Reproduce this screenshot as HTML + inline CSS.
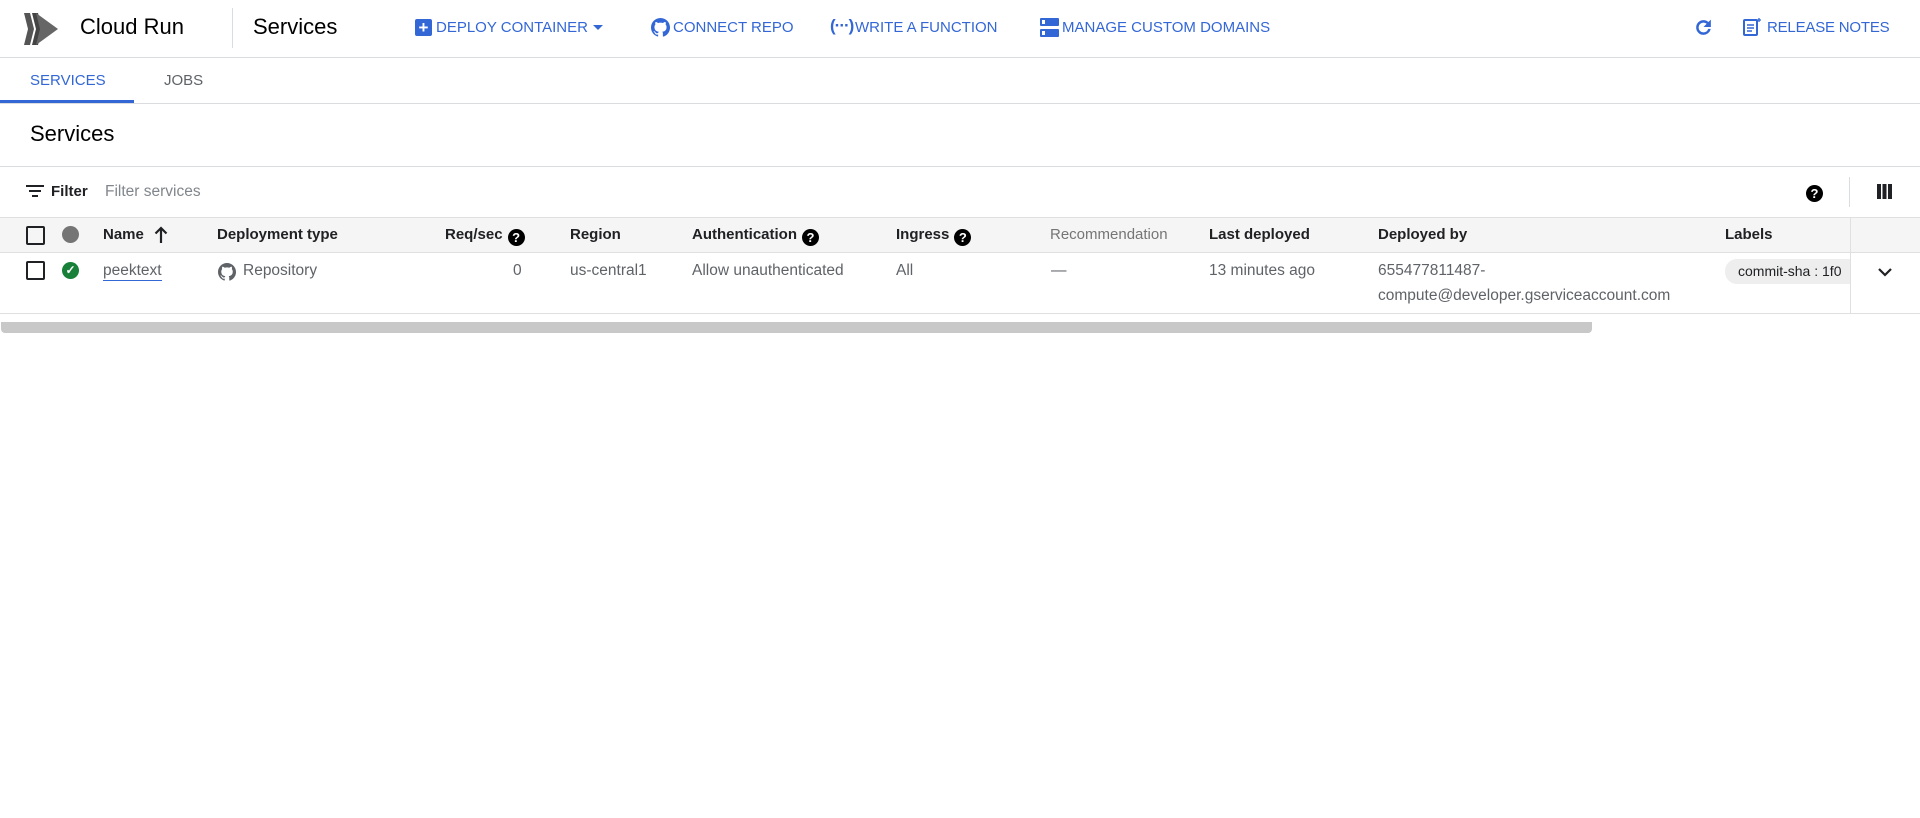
<!DOCTYPE html>
<html><head><meta charset="utf-8"><style>
*{box-sizing:border-box;margin:0;padding:0}
body{width:1920px;height:818px;background:#fff;font-family:"Liberation Sans",sans-serif;color:#202124;position:relative;overflow:hidden}
.a{position:absolute;white-space:nowrap}
.blue{color:#3367d6}
.hl{position:absolute;left:0;width:1920px;height:1px;background:#dadce0}
.h{font-weight:bold;font-size:15px;color:#202124;top:226px}
.d{font-size:15.5px;color:#5f6368;top:262px}
.q{display:inline-block;width:17px;height:17px;border-radius:50%;background:#000;color:#fff;font-size:13px;font-weight:bold;text-align:center;line-height:17px;vertical-align:-3px;margin-left:5px}
</style></head><body>
<svg class="a" style="left:20px;top:9px" width="40" height="40" viewBox="0 0 40 40">
<polygon points="4,4 10,4 14,20 10,36 4,36 8,20" fill="#555"/>
<polygon points="12,4 18,4 22,20 18,36 12,36 16,20" fill="#444"/>
<polygon points="16,4 38,20 16,36 20,20" fill="#666"/>
</svg>
<div class="a" style="left:80px;top:14px;font-size:22px;color:#000">Cloud Run</div>
<div class="a" style="left:232px;top:8px;width:1px;height:40px;background:#dadce0"></div>
<div class="a" style="left:253px;top:14px;font-size:22px;color:#000">Services</div>

<div class="a" style="left:415px;top:19px;width:17px;height:17px;background:#3367d6;border-radius:2px;color:#fff;font-weight:bold;font-size:17px;line-height:17px;text-align:center">+</div>
<div class="a blue" style="left:436px;top:19px;font-size:15px">DEPLOY CONTAINER</div>
<div class="a" style="left:593px;top:25px;width:0;height:0;border-left:5px solid transparent;border-right:5px solid transparent;border-top:5px solid #3367d6"></div>

<svg class="a" style="left:651px;top:18px" width="19" height="19" viewBox="0 0 16 16"><path fill="#3367d6" d="M8 0C3.58 0 0 3.58 0 8c0 3.54 2.29 6.53 5.47 7.590.4.07.55-.17.55-.38v-1.33c-2.23.48-2.7-1.07-2.7-1.07-.36-.92-.89-1.17-.89-1.17-.73-.5.05-.49.05-.49.8.06 1.23.83 1.23.83.72 1.23 1.88.87 2.34.67.07-.52.28-.87.51-1.07-1.78-.2-3.65-.89-3.65-3.95 0-.87.31-1.59.82-2.15-.08-.2-.36-1.02.08-2.12 0 0 .67-.21 2.2.82.64-.18 1.32-.27 2-.27s1.36.09 2 .27c1.53-1.04 2.2-.82 2.2-.82.44 1.1.16 1.92.08 2.12.51.56.82 1.27.82 2.15 0 3.07-1.87 3.75-3.65 3.95.29.25.54.73.54 1.48v2.2c0 .21.15.46.55.38A8.01 8.01 0 0016 8c0-4.42-3.58-8-8-8z"/></svg>
<div class="a blue" style="left:673px;top:19px;font-size:15px">CONNECT REPO</div>

<div class="a blue" style="left:830px;top:16px;font-size:17px;font-weight:bold;letter-spacing:-1px">(···)</div>
<div class="a blue" style="left:855px;top:19px;font-size:15px">WRITE A FUNCTION</div>

<svg class="a" style="left:1040px;top:18px" width="19" height="19" viewBox="0 0 19 19"><rect x="0" y="0" width="19" height="8" rx="1" fill="#3367d6"/><rect x="0" y="11" width="19" height="8" rx="1" fill="#3367d6"/><rect x="2" y="2" width="3" height="4" fill="#fff"/><rect x="2" y="13" width="3" height="4" fill="#fff"/></svg>
<div class="a blue" style="left:1062px;top:19px;font-size:15px">MANAGE CUSTOM DOMAINS</div>

<svg class="a" style="left:1693px;top:17px" width="21" height="21" viewBox="0 0 24 24"><path fill="#3367d6" d="M17.65 6.35A7.958 7.958 0 0012 4c-4.42 0-7.99 3.58-7.99 8s3.57 8 7.99 8c3.73 0 6.84-2.550 7.73-6h-2.08A5.99 5.99 0 0112 18c-3.31 0-6-2.690-6-6s2.69-6 6-6c1.66 0 3.14.69 4.22 1.78L13 11h7V4l-2.35 2.35z" stroke="#3367d6" stroke-width="0.8"/></svg>
<svg class="a" style="left:1742px;top:17px" width="20" height="20" viewBox="0 0 20 20"><rect x="2" y="3" width="13" height="15" rx="1" fill="none" stroke="#3367d6" stroke-width="2"/><path d="M5 8h7M5 11h7M5 14h5" stroke="#3367d6" stroke-width="1.6"/><path d="M17 1v4M15 3h4" stroke="#3367d6" stroke-width="1.3"/></svg>
<div class="a blue" style="left:1767px;top:19px;font-size:15px;letter-spacing:-0.2px">RELEASE NOTES</div>

<div class="hl" style="top:57px"></div>
<div class="a blue" style="left:30px;top:72px;font-size:15px">SERVICES</div>
<div class="a" style="left:164px;top:72px;font-size:15px;color:#5f6368">JOBS</div>
<div class="a" style="left:0;top:100px;width:134px;height:3px;background:#3367d6"></div>
<div class="hl" style="top:103px"></div>
<div class="a" style="left:30px;top:121px;font-size:22px;color:#000">Services</div>
<div class="hl" style="top:166px"></div>
<svg class="a" style="left:26px;top:184px" width="18" height="14" viewBox="0 0 18 14"><path d="M0 2h18M3 7h12M6 12h6" stroke="#202124" stroke-width="2"/></svg>
<div class="a" style="left:51px;top:183px;font-size:15px;font-weight:bold">Filter</div>
<div class="a" style="left:105px;top:183px;font-size:15.5px;color:#80868b">Filter services</div>
<div class="a" style="left:1806px;top:182px"><span class="q" style="margin:0">?</span></div>
<div class="a" style="left:1849px;top:177px;width:1px;height:30px;background:#dadce0"></div>
<svg class="a" style="left:1877px;top:184px" width="15" height="15" viewBox="0 0 15 15"><rect x="0" y="0" width="4" height="15" fill="#202124"/><rect x="5.5" y="0" width="4" height="15" fill="#202124"/><rect x="11" y="0" width="4" height="15" fill="#202124"/></svg>
<div class="a" style="left:0;top:217px;width:1920px;height:36px;background:#f5f5f5;border-top:1px solid #e0e0e0;border-bottom:1px solid #e0e0e0"></div>
<div class="a" style="left:1850px;top:217px;width:1px;height:97px;background:#e0e0e0"></div>
<div class="a" style="left:26px;top:226px;width:19px;height:19px;border:2px solid #202124;border-radius:2px"></div>
<div class="a" style="left:62px;top:226px;width:17px;height:17px;border-radius:50%;background:#757575"></div>
<div class="a h" style="left:103px">Name</div>
<svg class="a" style="left:154px;top:226px" width="14" height="18" viewBox="0 0 14 18"><path d="M7 17V2M1.5 7.5L7 2l5.5 5.5" stroke="#202124" stroke-width="2.2" fill="none"/></svg>
<div class="a h" style="left:217px">Deployment type</div>
<div class="a h" style="left:445px">Req/sec<span class="q">?</span></div>
<div class="a h" style="left:570px">Region</div>
<div class="a h" style="left:692px">Authentication<span class="q">?</span></div>
<div class="a h" style="left:896px">Ingress<span class="q">?</span></div>
<div class="a h" style="left:1050px;color:#757575;font-weight:normal">Recommendation</div>
<div class="a h" style="left:1209px">Last deployed</div>
<div class="a h" style="left:1378px">Deployed by</div>
<div class="a h" style="left:1725px">Labels</div>
<div class="a" style="left:26px;top:261px;width:19px;height:19px;border:2px solid #202124;border-radius:2px"></div>
<div class="a" style="left:62px;top:262px;width:17px;height:17px;border-radius:50%;background:#188038;color:#fff;font-size:12px;font-weight:bold;text-align:center;line-height:17px">✓</div>
<div class="a d blue" style="left:103px;border-bottom:1px solid #3367d6;line-height:18px">peektext</div>
<svg class="a" style="left:218px;top:263px" width="18" height="18" viewBox="0 0 16 16"><path fill="#5f6368" d="M8 0C3.58 0 0 3.58 0 8c0 3.54 2.29 6.53 5.47 7.59.4.07.55-.17.55-.38v-1.33c-2.23.48-2.7-1.07-2.7-1.07-.36-.92-.89-1.17-.89-1.17-.73-.5.05-.49.05-.49.8.06 1.23.83 1.23.83.72 1.23 1.88.87 2.34.67.07-.52.28-.87.51-1.07-1.78-.2-3.65-.89-3.65-3.95 0-.87.31-1.59.82-2.15-.08-.2-.36-1.02.08-2.12 0 0 .67-.21 2.2.82.64-.18 1.32-.27 2-.27s1.36.09 2 .27c1.53-1.04 2.2-.82 2.2-.82.44 1.1.16 1.92.08 2.12.51.56.82 1.27.82 2.15 0 3.07-1.87 3.75-3.65 3.95.29.25.54.73.54 1.48v2.2c0 .21.15.46.55.38A8.01 8.01 0 0016 8c0-4.42-3.58-8-8-8z"/></svg>
<div class="a d" style="left:243px">Repository</div>
<div class="a d" style="left:513px">0</div>
<div class="a d" style="left:570px">us-central1</div>
<div class="a d" style="left:692px">Allow unauthenticated</div>
<div class="a d" style="left:896px">All</div>
<div class="a d" style="left:1051px">—</div>
<div class="a d" style="left:1209px">13 minutes ago</div>
<div class="a d" style="left:1378px">655477811487-</div>
<div class="a d" style="left:1378px;top:287px">compute@developer.gserviceaccount.com</div>
<div class="a" style="left:1725px;top:259px;width:125px;height:25px;background:#eeeeee;border-radius:12px 0 0 12px;overflow:hidden;font-size:14px;line-height:25px;padding-left:13px;color:#202124">commit-sha : 1f0</div>
<svg class="a" style="left:1877px;top:266px" width="16" height="12" viewBox="0 0 16 12"><path d="M2 3l6 6 6-6" stroke="#202124" stroke-width="2.2" fill="none"/></svg>
<div class="hl" style="top:313px;background:#e0e0e0"></div>
<div class="a" style="left:1px;top:322px;width:1591px;height:11px;background:#c8c8c8;border-radius:0 0 4px 4px"></div>
</body></html>
